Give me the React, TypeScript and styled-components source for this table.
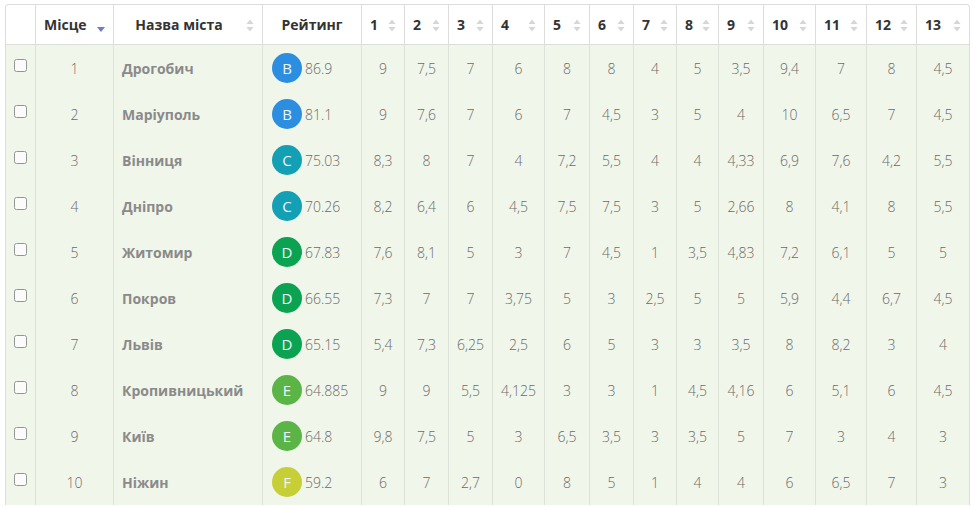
import React from 'react';
import styled, { createGlobalStyle } from 'styled-components';

const GlobalStyle = createGlobalStyle`
  body {
    margin: 0;
    background: #ffffff;
    font-family: "Open Sans", "Liberation Sans", sans-serif;
  }
`;

const Wrapper = styled.div`
  padding: 4px 7px 0 5px;
  height: 507px;
  overflow: hidden;
  box-sizing: border-box;
`;

const Table = styled.table`
  width: 963px;
  table-layout: fixed;
  border-collapse: separate;
  border-spacing: 0;
  border: 1px solid #dddddd;
  border-bottom: none;
  border-radius: 4px 4px 0 0;
  font-size: 14px;
`;

const HeadCell = styled.th<{ $align?: string; $padRight?: number }>`
  position: relative;
  height: 40px;
  padding: 0 ${(p) => p.$padRight ?? 8}px 0 8px;
  box-sizing: border-box;
  background: #ffffff;
  color: #333333;
  font-weight: 700;
  text-align: ${(p) => p.$align || 'left'};
  border-bottom: 1px solid #dddddd;
  border-left: 1px solid #dddddd;
  &:first-child {
    border-left: none;
    border-top-left-radius: 4px;
  }
  &:last-child {
    border-top-right-radius: 4px;
  }
`;

const SortIcon = styled.svg`
  position: absolute;
  right: 8px;
  top: 14px;
`;

const Row = styled.tr`
  background: #f1f6eb;
`;

const Cell = styled.td<{ $align?: string }>`
  height: 46px;
  padding: 0 4px;
  box-sizing: border-box;
  color: #6a6a6a;
  font-weight: 300;
  text-align: ${(p) => p.$align || 'center'};
  border-left: 1px solid #dde2d8;
  white-space: nowrap;
  &:first-child {
    border-left: none;
  }
`;

const CityCell = styled(Cell)`
  text-align: left;
  padding-left: 8px;
  color: #8a8a8a;
  font-weight: 700;
`;

const Check = styled.input`
  margin: 0 0 6px 4px;
  width: 13px;
  height: 13px;
  vertical-align: middle;
  opacity: 0.75;
`;

const Rating = styled.div`
  display: flex;
  align-items: center;
  gap: 3px;
  padding-left: 5px;
`;

const Badge = styled.span<{ $color: string }>`
  display: inline-flex;
  align-items: center;
  justify-content: center;
  width: 30px;
  height: 30px;
  border-radius: 50%;
  background: ${(p) => p.$color};
  color: #eef6ff;
  font-weight: 400;
  font-size: 15px;
`;

const gradeColors: Record<string, string> = {
  B: '#2b8ee0',
  C: '#13a0b4',
  D: '#0ba352',
  E: '#5bb446',
  F: '#c7cf36',
};

const widths = [29, 78, 149, 99, 43, 44, 44, 52, 45, 44, 43, 42, 45, 52, 51, 50, 53];

type City = { place: number; name: string; grade: string; score: string; marks: string[] };

const cities: City[] = [
  { place: 1, name: 'Дрогобич', grade: 'B', score: '86.9', marks: ['9', '7,5', '7', '6', '8', '8', '4', '5', '3,5', '9,4', '7', '8', '4,5'] },
  { place: 2, name: 'Маріуполь', grade: 'B', score: '81.1', marks: ['9', '7,6', '7', '6', '7', '4,5', '3', '5', '4', '10', '6,5', '7', '4,5'] },
  { place: 3, name: 'Вінниця', grade: 'C', score: '75.03', marks: ['8,3', '8', '7', '4', '7,2', '5,5', '4', '4', '4,33', '6,9', '7,6', '4,2', '5,5'] },
  { place: 4, name: 'Дніпро', grade: 'C', score: '70.26', marks: ['8,2', '6,4', '6', '4,5', '7,5', '7,5', '3', '5', '2,66', '8', '4,1', '8', '5,5'] },
  { place: 5, name: 'Житомир', grade: 'D', score: '67.83', marks: ['7,6', '8,1', '5', '3', '7', '4,5', '1', '3,5', '4,83', '7,2', '6,1', '5', '5'] },
  { place: 6, name: 'Покров', grade: 'D', score: '66.55', marks: ['7,3', '7', '7', '3,75', '5', '3', '2,5', '5', '5', '5,9', '4,4', '6,7', '4,5'] },
  { place: 7, name: 'Львів', grade: 'D', score: '65.15', marks: ['5,4', '7,3', '6,25', '2,5', '6', '5', '3', '3', '3,5', '8', '8,2', '3', '4'] },
  { place: 8, name: 'Кропивницький', grade: 'E', score: '64.885', marks: ['9', '9', '5,5', '4,125', '3', '3', '1', '4,5', '4,16', '6', '5,1', '6', '4,5'] },
  { place: 9, name: 'Київ', grade: 'E', score: '64.8', marks: ['9,8', '7,5', '5', '3', '6,5', '3,5', '3', '3,5', '5', '7', '3', '4', '3'] },
  { place: 10, name: 'Ніжин', grade: 'F', score: '59.2', marks: ['6', '7', '2,7', '0', '8', '5', '1', '4', '4', '6', '6,5', '7', '3'] },
];

const Both = () => (
  <SortIcon width="8" height="13" viewBox="0 0 8 13">
    <path d="M4 0.5 L7.5 5 L0.5 5 Z" fill="#d6d6d6" />
    <path d="M4 12.5 L7.5 8 L0.5 8 Z" fill="#d6d6d6" />
  </SortIcon>
);

const Down = () => (
  <SortIcon width="8" height="13" viewBox="0 0 8 13">
    <path d="M4 13 L8 8 L0 8 Z" fill="#7479c4" />
  </SortIcon>
);

const App: React.FC = () => {
  return (
    <Wrapper>
      <GlobalStyle />
      <Table>
        <colgroup>
          {widths.map((w, i) => (
            <col key={i} style={{ width: w }} />
          ))}
        </colgroup>
        <thead>
          <tr>
            <HeadCell />
            <HeadCell>Місце<Down /></HeadCell>
            <HeadCell $align="center" $padRight={26}>Назва міста<Both /></HeadCell>
            <HeadCell $align="center">Рейтинг</HeadCell>
            {Array.from({ length: 13 }, (_, i) => (
              <HeadCell key={i}>{i + 1}<Both /></HeadCell>
            ))}
          </tr>
        </thead>
        <tbody>
          {cities.map((c) => (
            <Row key={c.place}>
              <Cell $align="left"><Check type="checkbox" /></Cell>
              <Cell>{c.place}</Cell>
              <CityCell>{c.name}</CityCell>
              <Cell $align="left">
                <Rating>
                  <Badge $color={gradeColors[c.grade]}>{c.grade}</Badge>
                  {c.score}
                </Rating>
              </Cell>
              {c.marks.map((m, i) => (
                <Cell key={i}>{m}</Cell>
              ))}
            </Row>
          ))}
        </tbody>
      </Table>
    </Wrapper>
  );
};

export default App;
